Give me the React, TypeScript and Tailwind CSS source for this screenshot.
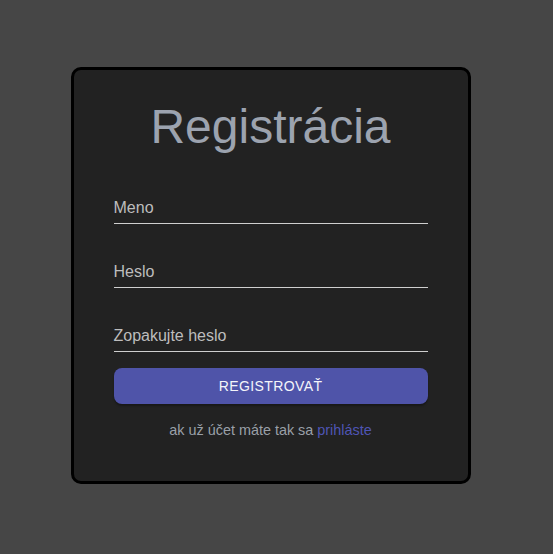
import React from "react";

function Field({ label }: { label: string }) {
  return (
    <div className="border-b border-[#cfcfcf] pb-[3px]">
      <div className="text-[16px] leading-[24px] text-[#bdbdbd]">{label}</div>
    </div>
  );
}

export default function App() {
  return (
    <div
      className="min-h-screen w-full bg-[#464646] flex justify-center pt-[67px] pr-[12px]"
      style={{ fontFamily: '"Liberation Sans", Arial, sans-serif' }}
    >
      <div className="w-[400px] h-[417px] bg-[#222222] border-[3px] border-black rounded-[10px] px-[40px] pt-[33px]">
        <h1 className="text-[48px] leading-[48px] text-center text-[#9ca3af]">Registrácia</h1>
        <div className="mt-[45px] flex flex-col gap-[36px]">
          <Field label="Meno" />
          <Field label="Heslo" />
          <Field label="Zopakujte heslo" />
        </div>
        <button className="mt-[16px] w-full h-[36px] rounded-[8px] bg-[#4f54a9] text-[#f4f4fa] text-[14px] font-normal tracking-[0.4px] uppercase shadow-[0_2px_2px_rgba(0,0,0,0.3)]">
          Registrovať
        </button>
        <p className="mt-[16px] text-center text-[14.4px] leading-[20px] text-[#9aa0a8]">
          ak už účet máte tak sa <span className="text-[#4f55b5]">prihláste</span>
        </p>
      </div>
    </div>
  );
}
